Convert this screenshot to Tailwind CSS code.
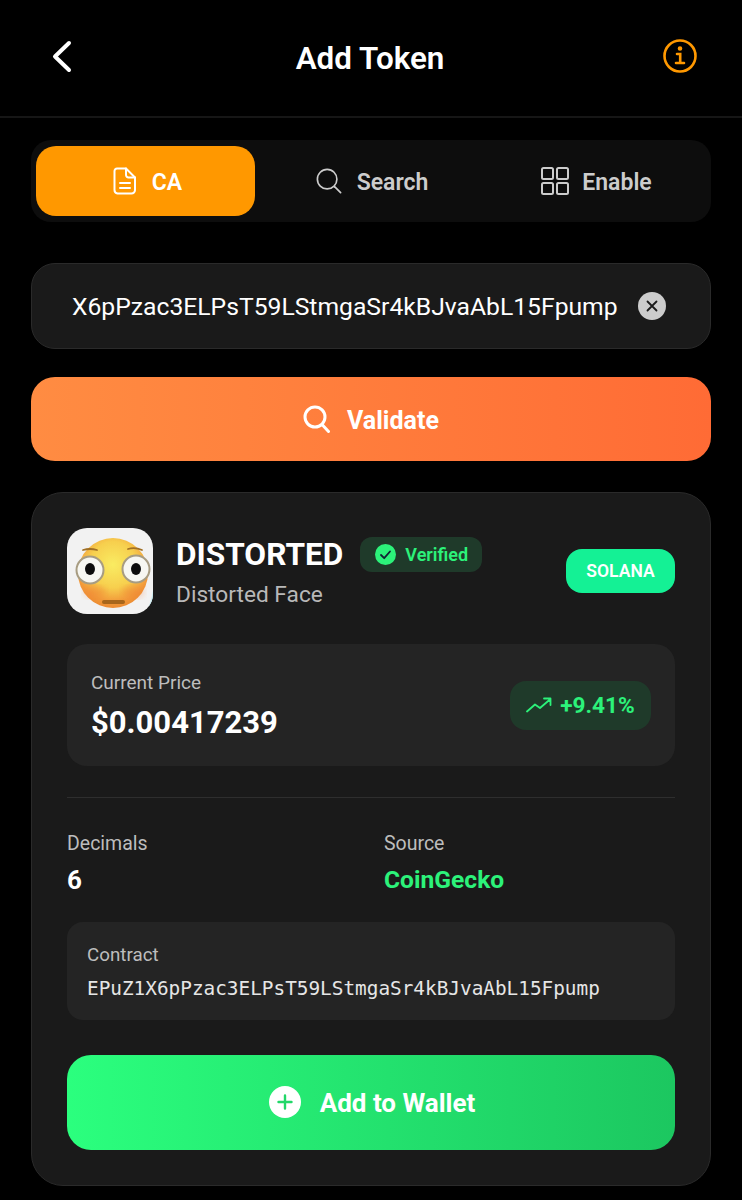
<!DOCTYPE html>
<html>
<head>
<meta charset="utf-8">
<script src="https://cdn.jsdelivr.net/npm/@tailwindcss/browser@4"></script>
</head>
<body class="bg-black">
<div class="w-[742px] h-[1200px] overflow-hidden bg-black text-white font-['Roboto',sans-serif]">
  <header class="h-[118px] border-b-2 border-[#161616] pl-[46px] pr-[46px] flex items-center justify-between pb-[2px]">
    <svg class="w-[32px] h-[40px] mt-[-2px]" viewBox="0 0 32 40" fill="none" stroke="#fff" stroke-width="4" stroke-linecap="round" stroke-linejoin="round"><path d="M23 7 L9 20.500 L23 34"/></svg>
    <h1 class="text-[31.400px] font-semibold leading-none mt-[4px]">Add Token</h1>
    <svg class="w-[36px] h-[36px] mt-[-2px] mr-[-2px]" viewBox="0 0 36 36" fill="none" stroke="#ff9800" stroke-width="2.600" stroke-linecap="round"><circle cx="18" cy="18" r="15.500"/><path d="M15 16h3.200v8M14 25h8"/><circle cx="18" cy="10.500" r="1" fill="#ff9800"/></svg>
  </header>

  <main class="px-[31px] pt-[22px]">
    <nav class="h-[82px] rounded-[20px] bg-[#0d0d0d] py-[6px] pl-[5px] pr-[5px] flex">
      <div class="w-[219px] pl-[4px] rounded-[20px] bg-[#ff9800] flex items-center justify-center gap-[15px] text-[23px] font-semibold">
        <svg class="w-[24px] h-[28px]" viewBox="0 0 24 28" fill="none" stroke="#fff" stroke-width="2" stroke-linecap="round" stroke-linejoin="round"><path d="M4 1.500h9l9 9V23a3.500 3.500 0 0 1-3.500 3.500h-14A3.500 3.500 0 0 1 1.500 23V4A2.500 2.500 0 0 1 4 1.500Z"/><path d="M13 1.500V8a2.500 2.500 0 0 0 2.500 2.500H22M7 16h10M7 21h10"/></svg>
        <span class="pt-[5px]">CA</span>
      </div>
      <div class="w-[232px] pl-[2px] flex items-center justify-center gap-[15px] text-[23px] font-semibold text-[#cccccc]">
        <svg class="w-[26px] h-[26px]" viewBox="0 0 28 28" fill="none" stroke="#cccccc" stroke-width="1.800" stroke-linecap="round"><circle cx="12" cy="12" r="10.500"/><path d="M20 20l6.500 6.500"/></svg>
        <span class="pt-[5px]">Search</span>
      </div>
      <div class="flex-1 flex items-center justify-center gap-[13px] text-[23px] font-semibold text-[#cccccc]">
        <svg class="w-[28px] h-[28px]" viewBox="0 0 28 28" fill="none" stroke="#cccccc" stroke-width="2"><rect x="1" y="1" width="11" height="11" rx="1.500"/><rect x="16" y="1" width="11" height="11" rx="1.500"/><rect x="1" y="16" width="11" height="11" rx="1.500"/><rect x="16" y="16" width="11" height="11" rx="1.500"/></svg>
        <span class="pt-[5px]">Enable</span>
      </div>
    </nav>

    <div class="mt-[41px] h-[86px] rounded-[24px] bg-[#1a1a1a] border border-[#2a2a2a] pl-[40px] pr-[44px] flex items-center justify-between">
      <span class="text-[24.700px] text-white whitespace-nowrap pt-[2px]">X6pPzac3ELPsT59LStmgaSr4kBJvaAbL15Fpump</span>
      <span class="w-[28px] h-[28px] rounded-full bg-[#cccccc] flex items-center justify-center">
        <svg class="w-[12px] h-[12px]" viewBox="0 0 12 12" fill="none" stroke="#1a1a1a" stroke-width="1.800" stroke-linecap="round"><path d="M1.500 1.500l9 9M10.500 1.500l-9 9"/></svg>
      </span>
    </div>

    <button class="mt-[28px] w-full h-[84px] rounded-[24px] bg-linear-to-r from-[#ff8c42] to-[#ff6b35] flex items-center justify-center gap-[17px] text-[25px] font-bold text-white">
      <svg class="w-[27px] h-[28px]" viewBox="0 0 27 28" fill="none" stroke="#fff" stroke-width="3" stroke-linecap="round"><circle cx="12" cy="12" r="10"/><path d="M19.500 20l6 6.500"/></svg>
      <span class="pt-[3px]">Validate</span>
    </button>

    <section class="mt-[31px] h-[694px] rounded-[32px] bg-[#1a1a1a] border border-[#2a2a2a] px-[35px] pt-[35px]">
      <div class="flex items-start">
        <div class="w-[86px] h-[86px] rounded-[20px] bg-[#f2f2f2] overflow-hidden shrink-0">
          <svg class="w-full h-full" viewBox="0 0 86 86">
            <defs>
              <radialGradient id="f" cx="50%" cy="38%" r="66%"><stop offset="0" stop-color="#f9ec62"/><stop offset="0.5" stop-color="#f7cf4e"/><stop offset="0.8" stop-color="#f29a3a"/><stop offset="1" stop-color="#ea842e"/></radialGradient>
              <filter id="b"><feGaussianBlur stdDeviation="0.700"/></filter>
              <filter id="c"><feGaussianBlur stdDeviation="3"/></filter>
            </defs>
            <path d="M78 86q6-10 8-24v24Z" fill="#c8ecf2"/>
            <g filter="url(#b)">
              <circle cx="46" cy="45" r="35" fill="url(#f)"/>
              <ellipse cx="28" cy="64" rx="11" ry="6" fill="#ee7a30" opacity="0.35" filter="url(#c)"/>
              <ellipse cx="66" cy="64" rx="11" ry="6" fill="#ee7a30" opacity="0.35" filter="url(#c)"/>
              <circle cx="23" cy="42" r="13.500" fill="#f7f7f2" stroke="#a79c82" stroke-width="2"/>
              <circle cx="69" cy="41" r="13.500" fill="#f7f7f2" stroke="#a79c82" stroke-width="2"/>
              <ellipse cx="23" cy="41" rx="5" ry="6" fill="#111"/>
              <ellipse cx="69" cy="41" rx="5" ry="6" fill="#111"/>
              <path d="M16 22q7-2 14 0M61 21q7-2 14 1" stroke="#a06f25" stroke-width="1.800" fill="none" stroke-linecap="round"/>
              <rect x="35" y="72" width="23" height="4" rx="2" fill="#a8661c"/>
            </g>
          </svg>
        </div>
        <div class="ml-[23px] flex-1">
          <div class="flex items-center gap-[17px] h-[44px] mt-[4px]">
            <span class="text-[31.600px] font-bold leading-none whitespace-nowrap pt-[2px]">DISTORTED</span>
            <span class="h-[35px] w-[122px] rounded-[12px] bg-[#1f3a2a] flex items-center pl-[15px] gap-[9px] text-[18px] font-semibold text-[#2cf27a]">
              <svg class="w-[21px] h-[21px]" viewBox="0 0 21 21"><circle cx="10.500" cy="10.500" r="10.500" fill="#2cf27a"/><path d="M6 11l3.200 3.200L15 7.500" fill="none" stroke="#123" stroke-width="1.800" stroke-linecap="round" stroke-linejoin="round"/></svg>
              <span>Verified</span>
            </span>
          </div>
          <div class="text-[22.700px] leading-none text-[#b8b8b8] mt-[8px]">Distorted Face</div>
        </div>
        <span class="mt-[21px] h-[44px] w-[109px] rounded-[16px] bg-[#14f195] flex items-center justify-center text-[17.500px] font-semibold text-white">SOLANA</span>
      </div>

      <div class="mt-[30px] h-[122px] rounded-[20px] bg-[#242424] pl-[24px] pr-[24px] flex items-center justify-between">
        <div>
          <div class="text-[19px] leading-none text-[#bdbdbd]">Current Price</div>
          <div class="text-[31px] font-bold leading-none mt-[15px]">$0.00417239</div>
        </div>
        <span class="h-[49px] w-[141px] rounded-[16px] bg-[#1f3a2a] flex items-center justify-center gap-[8px] text-[22.600px] font-bold text-[#2cf27a]">
          <svg class="w-[26px] h-[16px]" viewBox="0 0 26 16" fill="none" stroke="#2cf27a" stroke-width="1.800" stroke-linecap="round" stroke-linejoin="round"><path d="M1 14.500l8-7 5 3.500L24.500 2M18 1.500h6.500V8"/></svg>
          <span class="pt-[2px]">+9.41%</span>
        </span>
      </div>

      <div class="mt-[31px] h-px bg-[#2e2e2e]"></div>

      <div class="mt-[36px] flex">
        <div class="w-[317px]">
          <div class="text-[19.500px] leading-none text-[#bdbdbd]">Decimals</div>
          <div class="text-[26px] font-bold leading-none mt-[13px]">6</div>
        </div>
        <div>
          <div class="text-[19.500px] leading-none text-[#bdbdbd]">Source</div>
          <div class="text-[24.600px] font-bold leading-none mt-[14px] text-[#2cf27a]">CoinGecko</div>
        </div>
      </div>

      <div class="mt-[29px] h-[98px] rounded-[16px] bg-[#242424] pl-[20px] pt-[24px]">
        <div class="text-[18.800px] leading-none text-[#bdbdbd]">Contract</div>
        <div class="font-['DejaVu_Sans_Mono',monospace] text-[19.360px] leading-none mt-[15px] text-[#e6e6e6] whitespace-nowrap">EPuZ1X6pPzac3ELPsT59LStmgaSr4kBJvaAbL15Fpump</div>
      </div>

      <button class="mt-[35px] w-full h-[95px] rounded-[24px] bg-linear-to-r from-[#2bff7e] to-[#1cc760] flex items-center justify-center gap-[19px] pl-[2px] text-[26px] font-bold text-white">
        <span class="w-[32px] h-[32px] rounded-full bg-white flex items-center justify-center">
          <svg class="w-[16px] h-[16px]" viewBox="0 0 16 16" fill="none" stroke="#22d768" stroke-width="2.400" stroke-linecap="round"><path d="M8 1.500v13M1.500 8h13"/></svg>
        </span>
        <span class="pt-[3px]">Add to Wallet</span>
      </button>
    </section>
  </main>
</div>
</body>
</html>
